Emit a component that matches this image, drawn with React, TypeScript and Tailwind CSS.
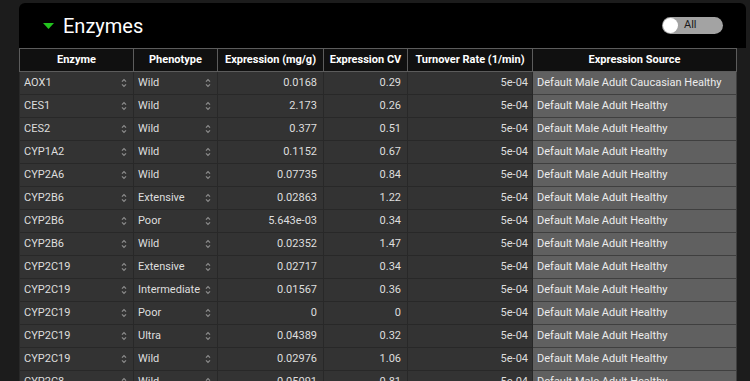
interface Row {
  enzyme: string;
  phenotype: string;
  expression: string;
  cv: string;
  turnover: string;
  source: string;
}

const rows: Row[] = [
  { enzyme: 'AOX1', phenotype: 'Wild', expression: '0.0168', cv: '0.29', turnover: '5e-04', source: 'Default Male Adult Caucasian Healthy' },
  { enzyme: 'CES1', phenotype: 'Wild', expression: '2.173', cv: '0.26', turnover: '5e-04', source: 'Default Male Adult Healthy' },
  { enzyme: 'CES2', phenotype: 'Wild', expression: '0.377', cv: '0.51', turnover: '5e-04', source: 'Default Male Adult Healthy' },
  { enzyme: 'CYP1A2', phenotype: 'Wild', expression: '0.1152', cv: '0.67', turnover: '5e-04', source: 'Default Male Adult Healthy' },
  { enzyme: 'CYP2A6', phenotype: 'Wild', expression: '0.07735', cv: '0.84', turnover: '5e-04', source: 'Default Male Adult Healthy' },
  { enzyme: 'CYP2B6', phenotype: 'Extensive', expression: '0.02863', cv: '1.22', turnover: '5e-04', source: 'Default Male Adult Healthy' },
  { enzyme: 'CYP2B6', phenotype: 'Poor', expression: '5.643e-03', cv: '0.34', turnover: '5e-04', source: 'Default Male Adult Healthy' },
  { enzyme: 'CYP2B6', phenotype: 'Wild', expression: '0.02352', cv: '1.47', turnover: '5e-04', source: 'Default Male Adult Healthy' },
  { enzyme: 'CYP2C19', phenotype: 'Extensive', expression: '0.02717', cv: '0.34', turnover: '5e-04', source: 'Default Male Adult Healthy' },
  { enzyme: 'CYP2C19', phenotype: 'Intermediate', expression: '0.01567', cv: '0.36', turnover: '5e-04', source: 'Default Male Adult Healthy' },
  { enzyme: 'CYP2C19', phenotype: 'Poor', expression: '0', cv: '0', turnover: '5e-04', source: 'Default Male Adult Healthy' },
  { enzyme: 'CYP2C19', phenotype: 'Ultra', expression: '0.04389', cv: '0.32', turnover: '5e-04', source: 'Default Male Adult Healthy' },
  { enzyme: 'CYP2C19', phenotype: 'Wild', expression: '0.02976', cv: '1.06', turnover: '5e-04', source: 'Default Male Adult Healthy' },
  { enzyme: 'CYP2C8', phenotype: 'Wild', expression: '0.05091', cv: '0.81', turnover: '5e-04', source: 'Default Male Adult Healthy' },
];

const headers = ['Enzyme', 'Phenotype', 'Expression (mg/g)', 'Expression CV', 'Turnover Rate (1/min)', 'Expression Source'];
const widths = ['w-[114px]', 'w-[84px]', 'w-[106px]', 'w-[84px]', 'w-[125px]', 'w-[204px]'];

// up/down arrows like a native select
const SelectArrows = () => (
  <svg width="6" height="10" viewBox="0 0 6 10" className="mr-[2px] shrink-0">
    <path d="M1 3.6 L3 1.6 L5 3.6" fill="none" stroke="#8c8c8c" strokeWidth="1.3" />
    <path d="M1 6.4 L3 8.4 L5 6.4" fill="none" stroke="#8c8c8c" strokeWidth="1.3" />
  </svg>
);

const SelectCell = ({ value }: { value: string }) => (
  <td className="h-[23px] border border-[#282828] bg-[#333333] px-[4px]">
    <div className="flex items-center justify-between">
      <span className="whitespace-nowrap">{value}</span>
      <SelectArrows />
    </div>
  </td>
);

const App = () => {
  return (
    <div className="h-[381px] w-[750px] overflow-hidden bg-[#1c1c1c] pl-[19px] pt-[3px] font-['Roboto',sans-serif] text-[11px] text-[#dedede]">
      <div className="flex h-[45px] w-[727px] items-center justify-between rounded-t-[6px] bg-black pl-[24px] pr-[23px]">
        <div className="flex items-center gap-[9px]">
          <svg width="11" height="6" viewBox="0 0 11 6">
            <polygon points="0,0 11,0 5.5,6" fill="#22c41e" />
          </svg>
          <span className="text-[20px] leading-none text-white">Enzymes</span>
        </div>
        <div className="flex h-[17px] w-[61px] items-center rounded-full bg-[#a3a3a3] pl-[1px]">
          <div className="h-[15px] w-[15px] rounded-full bg-white" />
          <span className="ml-[6px] text-[11px] text-[#1a1a1a]">All</span>
        </div>
      </div>
      <table className="w-[717px] table-fixed border-collapse">
        <thead>
          <tr>
            {headers.map((h, i) => (
              <th
                key={h}
                className={`${widths[i]} h-[23px] border border-[#5c5c5c] bg-[#101010] text-center font-bold text-white`}
              >
                {h}
              </th>
            ))}
          </tr>
        </thead>
        <tbody>
          {rows.map((r, i) => (
            <tr key={i}>
              <SelectCell value={r.enzyme} />
              <SelectCell value={r.phenotype} />
              <td className="h-[23px] border border-[#282828] bg-[#333333] px-[6px] text-right">{r.expression}</td>
              <td className="h-[23px] border border-[#282828] bg-[#333333] px-[6px] text-right">{r.cv}</td>
              <td className="h-[23px] border border-[#282828] bg-[#333333] px-[4px] text-right">{r.turnover}</td>
              <td className="h-[23px] whitespace-nowrap border border-[#3f3f3f] bg-[#606060] px-[4px] text-[#ececec]">
                {r.source}
              </td>
            </tr>
          ))}
        </tbody>
      </table>
    </div>
  );
};

export default App;
